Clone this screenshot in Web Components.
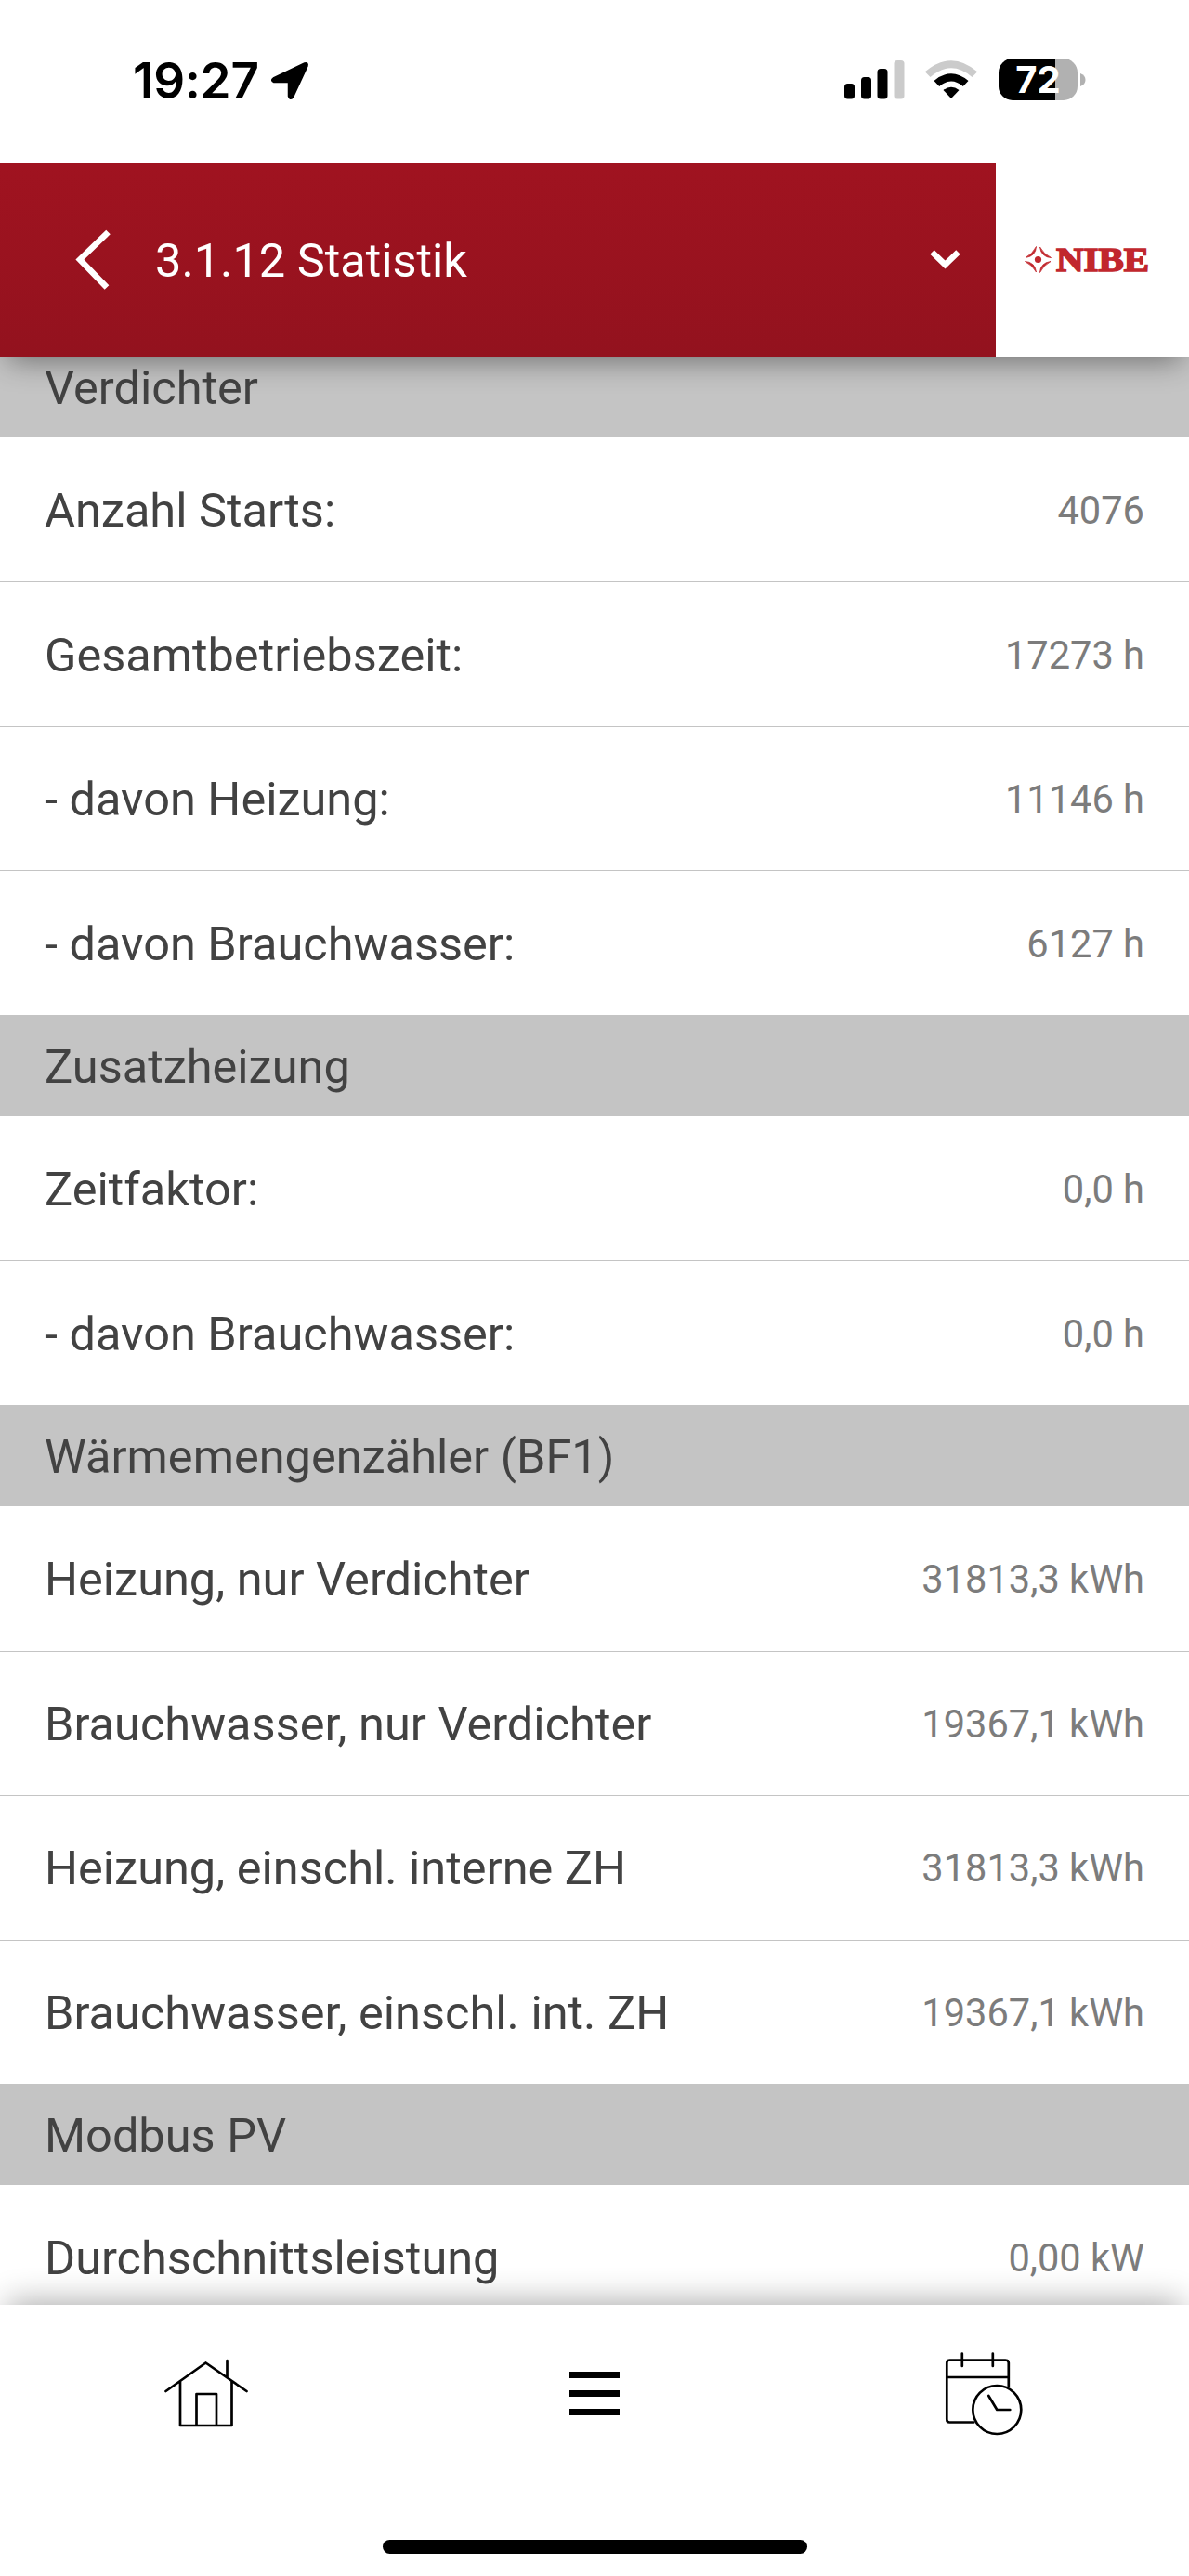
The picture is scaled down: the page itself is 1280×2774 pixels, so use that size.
<!DOCTYPE html>
<html lang="de">
<head>
<meta charset="utf-8">
<meta name="viewport" content="width=device-width, initial-scale=1">
<title>Statistik</title>
<style>
  body {
    margin: 0;
    background: #fff;
    font-family: Roboto, sans-serif;
  }
</style>
</head>
<body>
<heat-pump-app>
  <status-bar slot="top" time="19:27" battery="72"></status-bar>
  <page-header slot="top">3.1.12 Statistik</page-header>
  <stat-section heading="Verdichter">
    <stat-row value="4076">Anzahl Starts:</stat-row>
    <stat-row value="17273 h">Gesamtbetriebszeit:</stat-row>
    <stat-row value="11146 h">- davon Heizung:</stat-row>
    <stat-row value="6127 h">- davon Brauchwasser:</stat-row>
  </stat-section>
  <stat-section heading="Zusatzheizung">
    <stat-row value="0,0 h">Zeitfaktor:</stat-row>
    <stat-row value="0,0 h">- davon Brauchwasser:</stat-row>
  </stat-section>
  <stat-section heading="Wärmemengenzähler (BF1)">
    <stat-row value="31813,3 kWh">Heizung, nur Verdichter</stat-row>
    <stat-row value="19367,1 kWh">Brauchwasser, nur Verdichter</stat-row>
    <stat-row value="31813,3 kWh">Heizung, einschl. interne ZH</stat-row>
    <stat-row value="19367,1 kWh">Brauchwasser, einschl. int. ZH</stat-row>
  </stat-section>
  <stat-section heading="Modbus PV">
    <stat-row value="0,00 kW">Durchschnittsleistung</stat-row>
  </stat-section>
  <tab-bar slot="bottom"></tab-bar>
</heat-pump-app>

<script>
class HeatPumpApp extends HTMLElement {
  constructor(){
    super();
    this.attachShadow({ mode: "open" });
  }

  connectedCallback(){
    this.shadowRoot.innerHTML = `
      <style>
        :host {
          display: flex;
          flex-direction: column;
          height: 2774px;
          overflow: hidden;
        }
        header, footer {
          position: relative;
          z-index: 1;
          flex: none;
        }
        /* the list is scrolled, its first heading is partly under the header */
        main {
          flex: 1;
          min-height: 0;
          overflow: hidden;
        }
        .list {
          margin-top: -22.3px;
        }
      </style>
      <header><slot name="top"></slot></header>
      <main><div class="list"><slot></slot></div></main>
      <footer><slot name="bottom"></slot></footer>
    `;
  }
}

class StatusBar extends HTMLElement {
  constructor(){
    super();
    this.attachShadow({ mode: "open" });
  }

  connectedCallback(){
    const time = this.getAttribute("time");
    const battery = this.getAttribute("battery");
    this.shadowRoot.innerHTML = `
      <style>
        :host {
          display: flex;
          justify-content: space-between;
          box-sizing: border-box;
          position: relative;
          z-index: 1;
          height: 175px;
          padding: 0 111px 0 143px;
          background: #fff;
          font-family: Inter, sans-serif;
        }
        .left, .right {
          display: flex;
          align-items: center;
          height: 173px;
        }
        .right { height: 171px; }
        .time {
          font-size: 53px;
          font-weight: 600;
          letter-spacing: -0.2px;
        }
        .arrow { margin-left: 12px; }
        .wifi { margin: 0 22px 0 21px; }
        .battery {
          width: 85px;
          height: 45px;
          border-radius: 15px;
          display: grid;
          place-items: center;
          color: #fff;
          font-size: 40px;
          font-weight: 700;
          line-height: 45px;
          background: linear-gradient(90deg, #000 ${battery}%, #b1b1b1 ${battery}%);
        }
        svg { display: block; flex: none; }
        .tip { margin-left: 3px; }
      </style>
      <div class="left">
        <span class="time">${time}</span>
        <svg class="arrow" width="42" height="42" viewBox="0 0 42 42">
          <path d="M3.500 18.500 37 2.500Q40.500 1.500 39.500 5L24 38.500Q21 41.500 20 37.500V22H4Q0.500 20.500 3.500 18.500Z" stroke="#000" stroke-width="2.500" stroke-linejoin="round"/>
        </svg>
      </div>
      <div class="right">
        <svg width="65" height="42" viewBox="0 0 65 42">
          <rect x="0" y="25" width="11" height="16.500" rx="3.500"/>
          <rect x="18" y="18" width="11" height="23.500" rx="3.500"/>
          <rect x="35.500" y="9" width="11" height="32.500" rx="3.500"/>
          <rect x="53.500" y="0" width="11" height="41.500" rx="3.500" fill="#cbcbcb"/>
        </svg>
        <svg class="wifi" width="58" height="42" viewBox="0 0 58 42">
          <path d="M0.800 12.300Q29-12 57.200 12.300L51.500 18Q29-1.500 6.500 18Z" fill="#cbcbcb"/>
          <path d="M10.500 22Q29 6.500 47.500 22L41.800 28Q29 17 16.200 28Z"/>
          <path d="M20.500 32Q29 25.500 37.500 32L29 41Z"/>
        </svg>
        <div class="battery">${battery}</div>
        <svg class="tip" width="6" height="14" viewBox="0 0 6 14"><path d="M0 0Q5.500 2 5.500 7T0 14Z" fill="#b1b1b1"/></svg>
      </div>
    `;
  }
}

class PageHeader extends HTMLElement {
  constructor(){
    super();
    this.attachShadow({ mode: "open" });
  }

  connectedCallback(){
    this.shadowRoot.innerHTML = `
      <style>
        :host {
          display: flex;
          height: 209px;
          background: #fff;
          box-shadow: 0 12px 30px -8px rgba(0,0,0,0.45);
        }
        .bar {
          flex: 1;
          display: flex;
          align-items: center;
          box-sizing: border-box;
          padding: 0 36px 0 80px;
          color: #fff;
          font-size: 50.500px;
          background: linear-gradient(#a01320, #93121e);
          border-top: 1px solid #b9626a;
        }
        .title { flex: 1; padding-left: 46px; }
        svg { display: block; flex: none; }
        .logo {
          width: 208px;
          box-sizing: border-box;
          padding-left: 31px;
          display: flex;
          align-items: center;
        }
      </style>
      <div class="bar">
        <svg width="41" height="66" viewBox="0 0 41 66"><path d="M36.500 3 6 32.500 35 62.500" fill="none" stroke="#fff" stroke-width="6.500"/></svg>
        <span class="title"><slot></slot></span>
        <svg width="36" height="24" viewBox="0 0 36 24"><path d="M3.500 3.500 17.500 17 31.500 3.500" fill="none" stroke="#fff" stroke-width="6.500"/></svg>
      </div>
      <div class="logo">
        <svg width="150" height="60" viewBox="0 -15 150 60">
          <g fill="#c1272d">
            <circle cx="14.500" cy="14.500" r="3.600"/>
            <path id="q" d="M12.500 0.500Q12 11 1 12.500Q8.500 8.500 12.500 0.500Z" stroke="#c1272d" stroke-width="0.800"/>
            <use href="#q" transform="rotate(90 14.500 14.500)"/>
            <use href="#q" transform="rotate(180 14.500 14.500)"/>
            <use href="#q" transform="rotate(270 14.500 14.500)"/>
            <text x="34" y="26.500" font-family="Liberation Serif, serif" font-weight="700" font-size="36.500" textLength="100" lengthAdjust="spacingAndGlyphs" stroke="#c1272d" stroke-width="1.600">NIBE</text>
          </g>
        </svg>
      </div>
    `;
  }
}

class StatSection extends HTMLElement {
  constructor(){
    super();
    this.attachShadow({ mode: "open" });
  }

  connectedCallback(){
    const heading = this.getAttribute("heading");
    this.shadowRoot.innerHTML = `
      <style>
        :host { display: block; }
        h2 {
          display: flex;
          align-items: center;
          box-sizing: border-box;
          height: 109.300px;
          margin: 0;
          padding: 2px 48px 0;
          background: #c4c4c4;
          color: #424242;
          font-size: 50.500px;
          font-weight: 400;
        }
        ::slotted(stat-row:not(:first-child)) {
          border-top: 1px solid #c4c4c4;
        }
      </style>
      <h2>${heading}</h2>
      <slot></slot>
    `;
  }
}

class StatRow extends HTMLElement {
  constructor(){
    super();
    this.attachShadow({ mode: "open" });
  }

  connectedCallback(){
    const value = this.getAttribute("value");
    this.shadowRoot.innerHTML = `
      <style>
        :host {
          display: flex;
          align-items: center;
          justify-content: space-between;
          box-sizing: border-box;
          height: 155.450px;
          padding: 1px 48px 0;
          background: #fff;
          color: #424242;
          font-size: 50.500px;
        }
        .value {
          color: #7c7c7c;
          font-size: 41.600px;
        }
      </style>
      <span><slot></slot></span>
      <span class="value">${value}</span>
    `;
  }
}

class TabBar extends HTMLElement {
  constructor(){
    super();
    this.attachShadow({ mode: "open" });
  }

  connectedCallback(){
    this.shadowRoot.innerHTML = `
      <style>
        :host {
          display: flex;
          flex-direction: column;
          justify-content: space-between;
          align-items: center;
          box-sizing: border-box;
          height: 292px;
          padding-bottom: 24px;
          background: #fff;
          box-shadow: 0 -12px 32px -8px rgba(0,0,0,0.32);
        }
        nav {
          display: grid;
          grid-template-columns: 441px 398px 441px;
          justify-items: center;
          align-items: center;
          height: 190px;
        }
        svg {
          display: block;
          fill: none;
          stroke: #000;
          stroke-width: 2.700;
          stroke-linecap: round;
          stroke-linejoin: round;
        }
        .lines {
          display: grid;
          gap: 13px;
        }
        .lines i {
          width: 54px;
          height: 7px;
          background: #000;
        }
        .home-indicator {
          width: 457px;
          height: 15px;
          border-radius: 8px;
          background: #000;
        }
      </style>
      <nav>
        <svg width="92" height="90" viewBox="0 6 92 90">
          <path d="M3.500 49 46.500 18.500 90.500 49M69.500 34V16M19 38.500V86H74.500V38.500M36.500 86V52H58V86"/>
        </svg>
        <div class="lines"><i></i><i></i><i></i></div>
        <svg width="86" height="92" viewBox="0.700 0 86 92">
          <path d="M32 77.500H6Q3 77.500 3 74.500V13.500Q3 10.500 6 10.500H66Q69.500 10.500 69.500 13.500V39M3 29H69.500M19.500 3.500V17M52.500 3.500V17"/>
          <circle cx="57" cy="64" r="26"/>
          <path d="M48 49 57 64H71"/>
        </svg>
      </nav>
      <div class="home-indicator"></div>
    `;
  }
}

customElements.define("heat-pump-app", HeatPumpApp);
customElements.define("status-bar", StatusBar);
customElements.define("page-header", PageHeader);
customElements.define("stat-section", StatSection);
customElements.define("stat-row", StatRow);
customElements.define("tab-bar", TabBar);
</script>
</body>
</html>
